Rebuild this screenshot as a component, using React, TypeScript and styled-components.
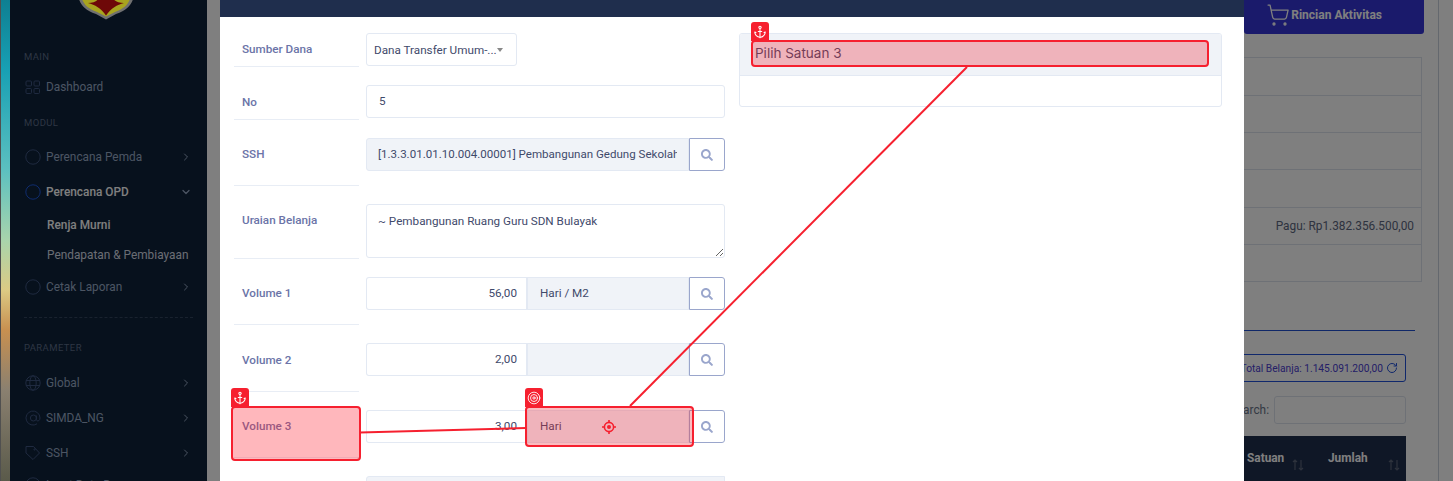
import { FC, ReactNode } from 'react';
import styled, { createGlobalStyle } from 'styled-components';
import { Anchor, ChevronDown, ChevronRight, RotateCw, ShoppingCart, Target } from 'lucide-react';
import { FaSearch } from 'react-icons/fa';

const GlobalStyle = createGlobalStyle`
  html, body { margin: 0; padding: 0; height: 100%; overflow: hidden; background: #fff; }
  * { box-sizing: border-box; }
  body { font-family: Roboto, "Liberation Sans", sans-serif; font-size: 12px; }
`;

const CircleIcon: FC<{ active?: boolean }> = ({ active }) => (
  <svg width="16" height="16" viewBox="0 0 16 16" fill="none" stroke={active ? '#1e58dc' : '#3e5480'}>
    <circle cx="8" cy="8" r="7.2" />
  </svg>
);

const GridIcon: FC = () => (
  <svg width="16" height="15" viewBox="0 0 16 15" fill="none" stroke="#3e5480">
    <rect x="1" y="1" width="5.5" height="5" rx="1" />
    <rect x="9" y="1" width="5.5" height="5" rx="1" />
    <rect x="1" y="8.5" width="5.5" height="5" rx="1" />
    <rect x="9" y="8.5" width="5.5" height="5" rx="1" />
  </svg>
);

const GlobeIcon: FC = () => (
  <svg width="16" height="16" viewBox="0 0 16 16" fill="none" stroke="#3e5480">
    <circle cx="8" cy="8" r="7.2" />
    <ellipse cx="8" cy="8" rx="3.2" ry="7.2" />
    <path d="M1 5.5h14M1 10.5h14" />
  </svg>
);

const AtIcon: FC = () => (
  <svg width="16" height="16" viewBox="0 0 16 16" fill="none" stroke="#3e5480">
    <circle cx="8.4" cy="8" r="3" />
    <path d="M11.4 5.5v4c0 2.2 3.6 2 3.6-1.5a7 7 0 1 0-3 5.8" />
  </svg>
);

const TagIcon: FC = () => (
  <svg width="16" height="16" viewBox="0 0 16 16" fill="none" stroke="#3e5480">
    <path d="M1 1.5h7.500l6 6.500-6.500 6.500L1 8z" />
    <circle cx="9.500" cy="4.500" r="0.6" />
  </svg>
);

const Crosshair: FC = () => (
  <svg width="14" height="14" viewBox="0 0 14 14" fill="none" stroke="#f6202f" strokeWidth="1.6">
    <circle cx="7" cy="7" r="4.6" />
    <circle cx="7" cy="7" r="2" fill="#f6202f" stroke="none" />
    <path d="M7 0v2.400M7 11.600V14M0 7h2.400M11.600 7H14" />
  </svg>
);

const Logo: FC = () => (
  <svg width="60" height="20" viewBox="0 0 60 20">
    <path d="M2 -4 C4 4 8 10 20 14 L30 19.500 L40 14 C52 10 56 4 58 -4 Z" fill="#707070" />
    <path d="M5 -4 C7 3 10 8 21 12 L30 16.500 L39 12 C50 8 53 3 55 -4 Z" fill="#a8a41e" />
    <path d="M12 3 C18 3 22 1 23 -3 L36 -3 C38 1 42 3 48 3 C41 5 35 8 30 15.500 C25 8 19 5 12 3 Z" fill="#6e0808" />
  </svg>
);

const SortArrows: FC = () => (
  <svg width="12" height="12" viewBox="0 0 12 12" fill="none" stroke="#5a6478" strokeWidth="1.2">
    <path d="M3 11V1M1 3l2-2 2 2M9 1v10M7 9l2 2 2-2" />
  </svg>
);

interface MenuItemProps {
  icon: ReactNode;
  label: string;
  open?: boolean;
  active?: boolean;
  noArrow?: boolean;
  gap?: number;
}

const MenuItem: FC<MenuItemProps> = ({ icon, label, open, active, noArrow, gap = 0 }) => (
  <MenuRow $gap={gap}>
    <MenuIcon>{icon}</MenuIcon>
    <MenuText $active={active}>{label}</MenuText>
    {!noArrow && (
      <MenuArrow>
        {open ? <ChevronDown size={12} strokeWidth={2.5} /> : <ChevronRight size={12} strokeWidth={2} />}
      </MenuArrow>
    )}
  </MenuRow>
);

const SearchButton: FC = () => (
  <SearchBtn>
    <FaSearch size={12} />
  </SearchBtn>
);

const App: FC = () => {
  return (
    <Page>
      <GlobalStyle />
      <Stripe />
      <Sidebar>
        <LogoBox>
          <Logo />
        </LogoBox>
        <SectionLabel $gap={30}>MAIN</SectionLabel>
        <MenuItem icon={<GridIcon />} label="Dashboard" noArrow gap={5.5} />
        <SectionLabel $gap={11.5}>MODUL</SectionLabel>
        <MenuItem icon={<CircleIcon />} label="Perencana Pemda" gap={9.5} />
        <MenuItem icon={<CircleIcon active />} label="Perencana OPD" open active />
        <SubItem $active>Renja Murni</SubItem>
        <SubItem>Pendapatan &amp; Pembiayaan</SubItem>
        <MenuItem icon={<CircleIcon />} label="Cetak Laporan" />
        <Divider />
        <SectionLabel $gap={23}>PARAMETER</SectionLabel>
        <MenuItem icon={<GlobeIcon />} label="Global" gap={10.5} />
        <MenuItem icon={<AtIcon />} label="SIMDA_NG" />
        <MenuItem icon={<TagIcon />} label="SSH" />
        <MenuItem icon={<CircleIcon />} label="Input Data Dasar" gap={-3} />
      </Sidebar>

      <Main>
        <ActivityButton>
          <ShoppingCart size={24} strokeWidth={1.3} />
          Rincian Aktivitas
        </ActivityButton>
        <InfoTable>
          <InfoRow $h={38} />
          <InfoRow $h={37} />
          <InfoRow $h={37} />
          <InfoRow $h={38} />
          <InfoRow $h={37}>Pagu: Rp1.382.356.500,00</InfoRow>
          <InfoRow $h={37} />
        </InfoTable>
        <TabLine />
        <TotalButton>
          Total Belanja: 1.145.091.200,00
          <RotateCw size={12} strokeWidth={2} />
        </TotalButton>
        <SearchRow>
          Search:
          <SearchInput />
        </SearchRow>
        <TableHead>
          <HeadCell $w={81} $arrow={20}>
            Satuan
            <SortArrows />
          </HeadCell>
          <HeadCell $w={82} $arrow={6}>
            Jumlah
            <SortArrows />
          </HeadCell>
        </TableHead>
      </Main>
      <ScrollTrack />

      <Backdrop />

      <Modal>
        <ModalHeader />
        <ModalBody>
          <FormColumn>
            <FormRow $h={34}>
              <FieldLabel>Sumber Dana</FieldLabel>
              <SelectBox>
                Dana Transfer Umum-...
                <Caret />
              </SelectBox>
            </FormRow>
            <FormRow $h={35}>
              <FieldLabel $pad={10}>No</FieldLabel>
              <InputGroup>
                <TextBox>5</TextBox>
              </InputGroup>
            </FormRow>
            <FormRow $h={48}>
              <FieldLabel>SSH</FieldLabel>
              <InputGroup>
                <TextBox $readOnly $tight>
                  <ClipText>[1.3.3.01.01.10.004.00001] Pembangunan Gedung Sekolah Dasar</ClipText>
                </TextBox>
                <SearchButton />
              </InputGroup>
            </FormRow>
            <FormRow $h={55}>
              <FieldLabel>Uraian Belanja</FieldLabel>
              <TextArea readOnly defaultValue="~ Pembangunan Ruang Guru SDN Bulayak" />
            </FormRow>
            <FormRow $h={48}>
              <FieldLabel>Volume 1</FieldLabel>
              <InputGroup>
                <NumberBox>56,00</NumberBox>
                <TextBox $readOnly>Hari / M2</TextBox>
                <SearchButton />
              </InputGroup>
            </FormRow>
            <FormRow $h={49}>
              <FieldLabel $pad={10}>Volume 2</FieldLabel>
              <InputGroup>
                <NumberBox>2,00</NumberBox>
                <TextBox $readOnly />
                <SearchButton />
              </InputGroup>
            </FormRow>
            <FormRow $h={48}>
              <FieldLabel>Volume 3</FieldLabel>
              <InputGroup>
                <NumberBox>3,00</NumberBox>
                <TextBox $readOnly>Hari</TextBox>
                <SearchButton />
              </InputGroup>
            </FormRow>
            <FormRow $h={48}>
              <FieldLabel />
              <InputGroup>
                <TextBox $readOnly />
              </InputGroup>
            </FormRow>
          </FormColumn>
          <UnitPanel>
            <UnitHeader>Pilih Satuan 3</UnitHeader>
            <UnitBody />
          </UnitPanel>
        </ModalBody>
      </Modal>

      <GuideLines width="1453" height="481" viewBox="0 0 1453 481">
        <line x1="360" y1="432.500" x2="526" y2="428" />
        <line x1="630" y1="406" x2="967" y2="67" />
      </GuideLines>

      <Highlight $x={231} $y={406} $w={130} $h={55} />
      <HighlightTab $x={231} $y={388}>
        <Anchor size={14} strokeWidth={1.8} />
      </HighlightTab>

      <Highlight $x={525} $y={406} $w={169} $h={41} $dark />
      <HighlightTab $x={525} $y={388}>
        <Target size={14} strokeWidth={1.5} />
      </HighlightTab>
      <CrosshairPin>
        <Crosshair />
      </CrosshairPin>

      <Highlight $x={751} $y={40} $w={458} $h={27} $dark />
      <HighlightTab $x={751} $y={22}>
        <Anchor size={14} strokeWidth={1.8} />
      </HighlightTab>
    </Page>
  );
};

export default App;

const Page = styled('div')`
  position: relative;
  display: flex;
  width: 1453px;
  height: 481px;
  overflow: hidden;
  background: #fff;
`;
const Stripe = styled('div')`
  position: relative;
  z-index: 1;
  flex: 0 0 10px;
  border-left: 1px solid #505050;
  background: linear-gradient(
    180deg,
    #0e7f92 0,
    #18a0b4 70px,
    #5cc0c0 170px,
    #a8d4ac 240px,
    #dcca84 290px,
    #c89050 330px,
    #8a8070 390px,
    #5a5a4a 481px
  );
`;
const Sidebar = styled('div')`
  flex: 0 0 197px;
  display: flex;
  flex-direction: column;
  padding: 0 14px;
  background: #0e223a;
  overflow: hidden;
`;
const LogoBox = styled('div')`
  position: relative;
  z-index: 1;
  flex: 0 0 18px;
  margin-left: 52px;
  overflow: visible;
  line-height: 0;
`;
const SectionLabel = styled('div')<{ $gap: number }>`
  flex: 0 0 14px;
  margin-top: ${(p) => p.$gap}px;
  font-size: 9.5px;
  line-height: 14px;
  letter-spacing: 0.4px;
  color: #5c6c88;
`;
const MenuRow = styled('div')<{ $gap: number }>`
  flex: 0 0 35px;
  display: flex;
  align-items: center;
  margin-top: ${(p) => p.$gap}px;
  font-size: 11.85px;
`;
const MenuIcon = styled('span')`
  flex: 0 0 22px;
  display: flex;
  align-items: center;
  padding-left: 1px;
`;
const MenuText = styled('span')<{ $active?: boolean }>`
  flex: 1;
  color: ${(p) => (p.$active ? '#fff' : '#98aac6')};
  font-weight: ${(p) => (p.$active ? 500 : 400)};
`;
const MenuArrow = styled('span')`
  display: flex;
  margin-right: 1px;
  color: #98aac6;
`;
const SubItem = styled('div')<{ $active?: boolean }>`
  flex: 0 0 30px;
  min-height: 0;
  padding-left: 23px;
  font-size: 11.85px;
  line-height: 30px;
  white-space: nowrap;
  font-weight: ${(p) => (p.$active ? 500 : 400)};
  color: ${(p) => (p.$active ? '#fff' : '#d5dbe6')};
`;
const Divider = styled('div')`
  flex: 0 0 0;
  margin-top: 12px;
  border-top: 1px dashed #33445e;
`;
const Main = styled('div')`
  flex: 1;
  display: flex;
  flex-direction: column;
  align-items: flex-end;
  color: #6a7489;
  min-width: 0;
  & > * {
    flex-shrink: 0;
  }
`;
const ActivityButton = styled('div')`
  display: flex;
  align-items: center;
  justify-content: flex-end;
  gap: 1px;
  width: 180px;
  height: 34px;
  margin-right: 14px;
  padding: 0 42px 4px 0;
  border-radius: 0 0 3px 3px;
  background: #3535d6;
  color: #fff;
  font-size: 12px;
  font-weight: 700;
`;
const InfoTable = styled('div')`
  width: 400px;
  margin-top: 23px;
  margin-right: 16px;
  border-right: 1px solid #dde3ed;
`;
const InfoRow = styled('div')<{ $h: number }>`
  height: ${(p) => p.$h}px;
  display: flex;
  align-items: center;
  justify-content: flex-end;
  padding-right: 7px;
  border-top: 1px solid #dde3ed;
  &:last-child {
    height: 38px;
    border-bottom: 1px solid #dde3ed;
  }
  font-size: 11.85px;
  color: #5c6680;
`;
const TabLine = styled('div')`
  width: 300px;
  margin-top: 48px;
  margin-right: 23px;
  border-top: 1px solid #2050d0;
`;
const TotalButton = styled('div')`
  display: flex;
  align-items: center;
  gap: 3px;
  height: 28px;
  margin-top: 23px;
  margin-right: 32px;
  padding: 0 7px 0 8px;
  border: 1px solid #2050d8;
  border-radius: 3px;
  color: #4a40d0;
  font-size: 10.2px;
  white-space: nowrap;
  svg {
    color: #2050d8;
  }
`;
const SearchRow = styled('div')`
  display: flex;
  align-items: center;
  gap: 5px;
  margin-top: 14px;
  margin-right: 32px;
  font-size: 11.85px;
  color: #6a7489;
`;
const SearchInput = styled('div')`
  width: 132px;
  height: 28px;
  border: 1px solid #dde3ed;
  border-radius: 3px;
`;
const TableHead = styled('div')`
  display: flex;
  width: 190px;
  height: 60px;
  margin-top: 12px;
  margin-right: 32px;
  background: #1f2e4d;
  justify-content: flex-end;
  color: #fff;
  font-size: 11.85px;
  font-weight: 700;
`;
const HeadCell = styled('div')<{ $w: number; $arrow: number }>`
  position: relative;
  width: ${(p) => p.$w}px;
  padding-top: 15px;
  padding-left: 4px;
  svg {
    position: absolute;
    right: ${(p) => p.$arrow}px;
    top: 23px;
  }
`;
const ScrollTrack = styled('div')`
  flex: 0 0 15px;
  border-left: 1px solid #c8d0dc;
`;
const Backdrop = styled('div')`
  position: absolute;
  inset: 0;
  background: rgba(0, 0, 0, 0.5);
`;
const Modal = styled('div')`
  position: absolute;
  z-index: 2;
  left: 220px;
  top: 0;
  width: 1024px;
  height: 481px;
  overflow: hidden;
  background: #fff;
`;
const ModalHeader = styled('div')`
  height: 17px;
  background: #1f2e4d;
`;
const ModalBody = styled('div')`
  display: grid;
  grid-template-columns: 491px 483px;
  gap: 14px;
  align-items: start;
  padding: 16px 22px 0 14px;
`;
const FormColumn = styled('div')`
  display: flex;
  flex-direction: column;
  gap: 18px;
`;
const FormRow = styled('div')<{ $h: number }>`
  display: grid;
  grid-template-columns: 125px minmax(0, 1fr);
  gap: 7px;
  height: ${(p) => p.$h}px;
  align-items: start;
`;
const FieldLabel = styled('div')<{ $pad?: number }>`
  height: 100%;
  padding: ${(p) => p.$pad ?? 9}px 0 0 8px;
  border-bottom: 1px solid #e8edf5;
  color: #6b74a8;
  font-size: 11.7px;
  font-weight: 500;
  line-height: 14px;
`;
const SelectBox = styled('div')`
  display: flex;
  align-items: center;
  width: 151px;
  height: 33px;
  padding-left: 7px;
  border: 1px solid #e3e9f3;
  border-radius: 3px;
  color: #3f4a6b;
  font-size: 11.7px;
  white-space: nowrap;
`;
const Caret = styled('span')`
  margin-left: 0;
  border-top: 4px solid #888;
  border-left: 3px solid transparent;
  border-right: 3px solid transparent;
`;
const InputGroup = styled('div')`
  display: flex;
  height: 33px;
  min-width: 0;
`;
const TextBox = styled('div')<{ $readOnly?: boolean; $tight?: boolean }>`
  flex: 1;
  min-width: 0;
  padding: 0 11px 0 ${(p) => (p.$tight ? 11 : 12)}px;
  border: 1px solid #e3e9f3;
  border-radius: 3px;
  background: ${(p) => (p.$readOnly ? '#f0f3f8' : '#fff')};
  color: #3f4a6b;
  font-size: ${(p) => (p.$tight ? 11.55 : 11.7)}px;
  line-height: 31px;
  white-space: nowrap;
  overflow: hidden;
  ${(p) => (p.$readOnly ? 'border-radius: 3px 0 0 3px;' : '')}
`;
const ClipText = styled('span')`
  display: block;
  overflow: hidden;
`;
const NumberBox = styled('div')`
  flex: 0 0 162px;
  padding: 0 9px;
  border: 1px solid #e3e9f3;
  border-right-width: 2px;
  border-radius: 3px 0 0 3px;
  color: #3f4a6b;
  font-size: 11.7px;
  line-height: 31px;
  text-align: right;
  & + ${TextBox} {
    border-left: 0;
    border-radius: 0;
  }
`;
const SearchBtn = styled('div')`
  flex: 0 0 36px;
  display: flex;
  align-items: center;
  justify-content: center;
  border: 1px solid #9aa6cc;
  border-radius: 0 3px 3px 0;
  background: #fff;
  color: #9aa6cc;
`;
const TextArea = styled('textarea')`
  display: block;
  width: 100%;
  height: 54px;
  padding: 8px 11px;
  border: 1px solid #e3e9f3;
  border-radius: 3px;
  outline: none;
  color: #3f4a6b;
  font-family: Roboto, "Liberation Sans", sans-serif;
  font-size: 11.7px;
  line-height: 16px;
`;
const UnitPanel = styled('div')`
  border: 1px solid #e3e9f3;
  border-radius: 3px;
  overflow: hidden;
`;
const UnitHeader = styled('div')`
  height: 42px;
  padding: 10px 0 0 15px;
  background: #f0f3f8;
  border-bottom: 1px solid #e3e9f3;
  color: #3f4a6b;
  font-family: Inter, "Liberation Sans", sans-serif;
  font-size: 13.5px;
  line-height: 18px;
`;
const UnitBody = styled('div')`
  height: 30px;
`;
const GuideLines = styled('svg')`
  position: absolute;
  z-index: 3;
  left: 0;
  top: 0;
  pointer-events: none;
  line {
    stroke: #f6202f;
    stroke-width: 2;
  }
`;
const Highlight = styled('div')<{ $x: number; $y: number; $w: number; $h: number; $dark?: boolean }>`
  position: absolute;
  z-index: 3;
  left: ${(p) => p.$x}px;
  top: ${(p) => p.$y}px;
  width: ${(p) => p.$w}px;
  height: ${(p) => p.$h}px;
  border: 2px solid #f6202f;
  border-radius: 4px;
  background: ${(p) => (p.$dark ? 'rgba(240, 32, 46, 0.3)' : 'rgba(255, 32, 46, 0.32)')};
`;
const HighlightTab = styled('div')<{ $x: number; $y: number }>`
  position: absolute;
  z-index: 3;
  left: ${(p) => p.$x}px;
  top: ${(p) => p.$y}px;
  width: 18px;
  height: 19px;
  display: flex;
  align-items: center;
  justify-content: center;
  border-radius: 3px 3px 0 0;
  background: #f6202f;
  color: #fff;
`;
const CrosshairPin = styled('div')`
  position: absolute;
  z-index: 3;
  left: 602px;
  top: 420px;
  line-height: 0;
`;
